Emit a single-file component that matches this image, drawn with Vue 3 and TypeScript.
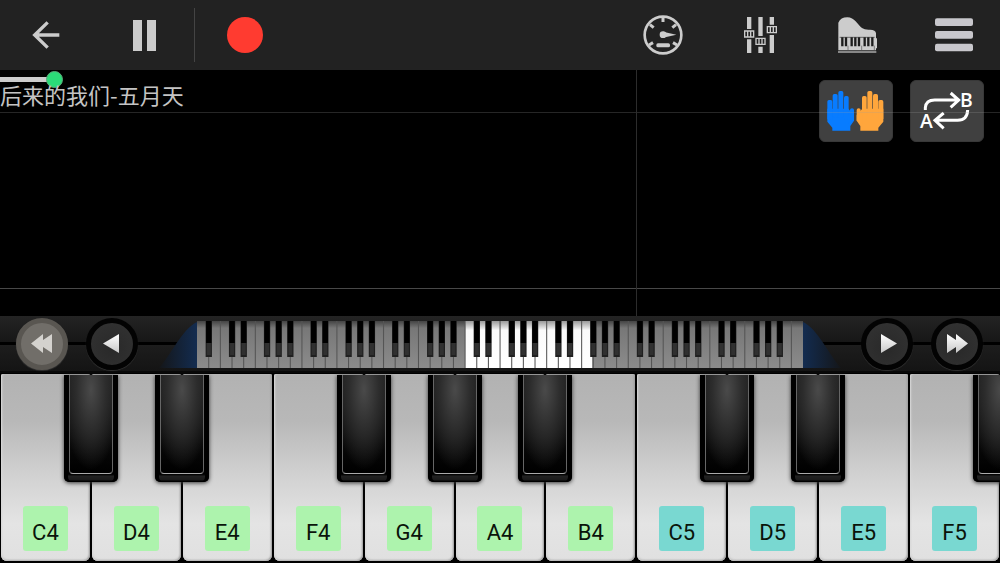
<script setup lang="ts">
import { computed, ref } from 'vue'

interface PianoKey {
  name: string
  octave: number
  sharp: boolean
}

const position = ref(4.7)
const trackStyle = computed(() => ({ backgroundSize: `${position.value}% 5px` }))

const keys: PianoKey[] = [
  { name: 'C4', octave: 4, sharp: true },
  { name: 'D4', octave: 4, sharp: true },
  { name: 'E4', octave: 4, sharp: false },
  { name: 'F4', octave: 4, sharp: true },
  { name: 'G4', octave: 4, sharp: true },
  { name: 'A4', octave: 4, sharp: true },
  { name: 'B4', octave: 4, sharp: false },
  { name: 'C5', octave: 5, sharp: true },
  { name: 'D5', octave: 5, sharp: true },
  { name: 'E5', octave: 5, sharp: false },
  { name: 'F5', octave: 5, sharp: true },
]

// The overview shows all 52 white keys of a full piano, starting at A0.
const whiteCount = 52
const firstVisible = 23
const visibleCount = 10.9
const separators = Array.from({ length: whiteCount - 1 }, (_, i) => i + 1)
const blacks = separators.filter((i) => ![2, 5].includes(i % 7))
</script>

<template>
  <main class="app">
    <header class="toolbar">
      <button class="tool" type="button" aria-label="Back">
        <svg width="28" height="28" viewBox="0 0 84 84">
          <path d="M47 4L8 42L47 80M9 42H82" fill="none" stroke="#ccc" stroke-width="10" />
        </svg>
      </button>
      <button class="tool pause" type="button" aria-label="Pause">
        <svg width="23" height="31" viewBox="0 0 23 31">
          <path d="M0 0H9V31H0zM14 0H23V31H14z" fill="#ccc" />
        </svg>
      </button>
      <span class="divider"></span>
      <button class="tool" type="button" aria-label="Record">
        <svg width="36" height="36" viewBox="0 0 36 36"><circle cx="18" cy="18" r="18" fill="#ff3b30" /></svg>
      </button>
      <div class="tools">
        <button class="tool" type="button" aria-label="Tempo">
          <svg width="40" height="40" viewBox="0 0 120 120">
            <circle cx="60" cy="60" r="55" fill="none" stroke="#ccc" stroke-width="8" />
            <path d="M60 5V21M21 29L32 38M99 29L88 38M18 90L30 83M102 90L90 83" stroke="#ccc" stroke-width="9" />
            <circle cx="60" cy="59" r="10" fill="#ccc" />
            <path d="M60 50L100 59L60 68z" fill="#ccc" />
            <rect x="40" y="85" width="41" height="12" rx="5" fill="#ccc" />
          </svg>
        </button>
        <button class="tool" type="button" aria-label="Mixer">
          <svg width="33" height="36" viewBox="0 0 99 108">
            <path d="M9 0H22V36H9zM9 67H22V108H9zM43 0H56V57H43zM43 89H56V108H43zM77 0H90V23H77zM77 54H90V108H77z" fill="#ccc" />
            <path d="M2 42H29V60H2zM11 42V60M20 42V60M36 64H63V82H36zM45 64V82M54 64V82M70 29H97V47H70zM79 29V47M88 29V47" fill="none" stroke="#ccc" stroke-width="4" />
          </svg>
        </button>
        <button class="tool" type="button" aria-label="Instrument">
          <svg width="39" height="36" viewBox="0 0 117 108">
            <path d="M1 100V17Q8 1 28 1C50 1 58 22 72 33Q80 39 96 38Q113 38 114 49V64H117V94H114V100z" fill="#ccc" />
            <path d="M5 61H110" stroke="#333" stroke-width="2" />
            <path d="M13 61V88M24 61V88M41 61V88M52 61V88M63 61V88M80 61V88M91 61V88M103 61V88" stroke="#1c1c1c" stroke-width="7" />
            <path d="M30 86V99M71 86V99M109 86V99" stroke="#555" stroke-width="2" />
            <path d="M0 105H115" stroke="#aaa" stroke-width="4" />
          </svg>
        </button>
        <button class="tool" type="button" aria-label="Menu">
          <svg width="38" height="34" viewBox="0 0 114 102" fill="#c8c7cc">
            <rect y="1" width="114" height="23" rx="6" />
            <rect y="39" width="114" height="23" rx="6" />
            <rect y="77" width="114" height="23" rx="6" />
          </svg>
        </button>
      </div>
    </header>

    <section class="roll">
      <input v-model.number="position" class="seek" :style="trackStyle" type="range" min="0" max="100" step="0.1" aria-label="Song position" />
      <div class="roll-row">
        <h1 class="title">后来的我们-五月天</h1>
        <div class="modes">
          <button class="mode" type="button" aria-label="Both hands">
            <svg width="60" height="42" viewBox="0 0 180 126">
              <defs>
                <g id="hand">
                  <path d="M4 56H67L84 75V92L73 108V122H19V113L4 95z" />
                  <rect x="4" y="30" width="15" height="60" rx="5" />
                  <rect x="20" y="12" width="15" height="70" rx="5" />
                  <rect x="37" y="3" width="15" height="80" rx="5" />
                  <rect x="54" y="18" width="14" height="70" rx="5" />
                  <path d="M66 76L72 66V60Q72 55 78 55Q84 55 84 60V92L66 100z" />
                </g>
              </defs>
              <use href="#hand" fill="#087cff" />
              <use href="#hand" fill="#ffa63c" transform="translate(176 0) scale(-1 1)" />
            </svg>
          </button>
          <button class="mode" type="button" aria-label="Repeat from A to B">
            <svg width="66" height="56" viewBox="-16 -24 198 168">
              <g fill="none" stroke="#fff" stroke-width="9">
                <path d="M18 57V50Q20 27 46 27H117M94 6L118 27L94 49" />
                <path d="M145 57Q144 87 115 88H48M73 66L47 88L73 112" />
              </g>
              <text class="loop-letter" x="122" y="48">B</text>
              <text class="loop-letter" x="2" y="110">A</text>
            </svg>
          </button>
        </div>
      </div>
      <span class="line line-top"></span>
      <span class="line line-bottom"></span>
      <span class="line-octave"></span>
    </section>

    <nav class="range" aria-label="Keyboard range">
      <button class="round held" type="button" aria-label="Previous octave">
        <svg width="22" height="19" viewBox="0 0 22 19"><path d="M0 9.500L12 0V6L21 0V19L12 13V19z" fill="#d4d2ce" /></svg>
      </button>
      <button class="round" type="button" aria-label="Previous key">
        <svg width="22" height="19" viewBox="0 0 22 19"><path d="M2 9.500L18 0V19z" fill="url(#shine)" /></svg>
      </button>
      <div class="overview">
        <svg class="wing" viewBox="0 0 38 47" preserveAspectRatio="none">
          <defs>
            <linearGradient id="blue"><stop offset="0" stop-color="#141619" /><stop offset="1" stop-color="#132c50" /></linearGradient>
            <linearGradient id="shine" x2="0" y2="1"><stop offset="0" stop-color="#fff" /><stop offset="1" stop-color="#c8c8c8" /></linearGradient>
          </defs>
          <path d="M0 47C12 34 23 8 38 1V47z" fill="url(#blue)" />
        </svg>
        <svg class="mini" viewBox="0 0 52 47" preserveAspectRatio="none" role="img" aria-label="Full keyboard">
          <defs>
            <linearGradient id="grey" x2="0" y2="1">
              <stop offset="0" stop-color="#444" /><stop offset=".15" stop-color="#777" /><stop offset="1" stop-color="#8b8b8b" />
            </linearGradient>
            <linearGradient id="lit" x2="0" y2="1">
              <stop offset="0" stop-color="#999" /><stop offset=".2" stop-color="#fafafa" /><stop offset="1" stop-color="#fff" />
            </linearGradient>
          </defs>
          <rect width="52" height="47" fill="url(#grey)" />
          <rect :x="firstVisible" :width="visibleCount" height="47" fill="url(#lit)" />
          <rect v-for="i in separators" :key="i" :x="i - 0.04" width=".09" height="47" fill="#555" />
          <g v-for="i in blacks" :key="i">
            <rect :x="i - 0.26" width=".54" height="36" fill="#202020" />
            <rect :x="i - 0.22" width=".46" height="22" fill="#000" />
            <rect :x="i - 0.16" y="22" width=".34" height="12" fill="#303030" />
          </g>
        </svg>
        <svg class="wing flipped" viewBox="0 0 38 47" preserveAspectRatio="none">
          <path d="M0 47C12 34 23 8 38 1V47z" fill="url(#blue)" />
        </svg>
      </div>
      <button class="round" type="button" aria-label="Next key">
        <svg width="22" height="19" viewBox="0 0 22 19"><path d="M5 0L21 9.500L5 19z" fill="url(#shine)" /></svg>
      </button>
      <button class="round" type="button" aria-label="Next octave">
        <svg width="22" height="19" viewBox="0 0 22 19"><path d="M1 0L10 6V0L22 9.500L10 19V13L1 19z" fill="url(#shine)" /></svg>
      </button>
    </nav>

    <section class="piano" aria-label="Piano">
      <div v-for="key in keys" :key="key.name" class="slot">
        <button class="white" type="button">
          <span class="note" :class="{ high: key.octave === 5 }">{{ key.name }}</span>
        </button>
        <button v-if="key.sharp" class="black" type="button" :aria-label="`${key.name} sharp`">
          <span class="black-top"></span>
        </button>
      </div>
    </section>
  </main>
</template>

<style>
body {
  margin: 0;
  background: #000;
}
</style>

<style scoped>
.app {
  display: flex;
  flex-direction: column;
  min-height: 100vh;
  overflow: hidden;
  background: #000;
  font-family: Roboto, "Noto Sans CJK SC", sans-serif;
}

button {
  margin: 0;
  padding: 0;
  border: 0;
  background: none;
  font: inherit;
  cursor: pointer;
}

svg {
  display: block;
}

.toolbar {
  display: flex;
  align-items: center;
  height: 70px;
  background: #222;
}

.tool {
  display: flex;
  align-items: center;
  justify-content: center;
  width: 92px;
  height: 70px;
}

.pause {
  margin-left: 6px;
}

.divider {
  width: 1px;
  height: 54px;
  margin: 0 4px;
  background: #444;
}

.tools {
  display: flex;
  gap: 5px;
  margin-left: auto;
}

.roll {
  position: relative;
  flex: 1;
  min-height: 246px;
}

.seek {
  position: absolute;
  top: 0;
  left: 0;
  width: 100%;
  height: 19px;
  margin: 0;
  appearance: none;
  background: linear-gradient(#ccc, #ccc) no-repeat left center;
}

.seek::-webkit-slider-thumb {
  appearance: none;
  box-sizing: border-box;
  width: 17px;
  height: 17px;
  border: 1px solid #5ba878;
  border-radius: 50%;
  background: #2bdc78;
}

.roll-row {
  display: flex;
  justify-content: space-between;
  padding: 10px 16px 0 0;
}

.title {
  position: relative;
  margin: 0;
  font-family: "Noto Sans CJK SC", sans-serif;
  font-size: 22px;
  font-weight: 400;
  line-height: 28px;
  color: #c4c4c4;
  pointer-events: none;
}

.modes {
  position: relative;
  display: flex;
  gap: 17px;
}

.mode {
  display: flex;
  align-items: center;
  justify-content: center;
  width: 74px;
  height: 62px;
  border: 1px solid #383838;
  border-radius: 6px;
  background: #404040;
}

.loop-letter {
  font-family: "Open Sans", sans-serif;
  font-size: 58px;
  font-weight: 600;
  fill: #fff;
}

.line,
.line-octave {
  position: absolute;
  pointer-events: none;
}

.line {
  left: 0;
  right: 0;
  height: 1px;
}

.line-top {
  top: 42px;
  background: rgba(160, 160, 160, 0.24);
}

.line-bottom {
  top: 218px;
  background: #484848;
}

.line-octave {
  top: 0;
  bottom: 0;
  left: 63.6%;
  width: 1px;
  background: #2c2c2c;
}

.range {
  display: flex;
  align-items: center;
  gap: 18px;
  box-sizing: border-box;
  height: 57px;
  padding: 0 17px 0 16px;
  border-bottom: 2px solid #080808;
  background: linear-gradient(#242424, #171717 26px, #000 26px, #000 29px, #1d1d1d 29px, #141414);
}

.round {
  display: flex;
  flex: none;
  align-items: center;
  justify-content: center;
  box-sizing: border-box;
  width: 52px;
  height: 52px;
  border: 5px solid #030303;
  border-radius: 50%;
  background: radial-gradient(circle at 50% 60%, #292929, #333);
  box-shadow: 0 1px 1px #333;
}

.held {
  border-color: #595651;
  background: #716e69;
}

.overview {
  display: flex;
  flex: 1;
  height: 47px;
  margin: 1px 2px 0 3px;
}

.mini {
  flex: 1;
  min-width: 0;
  height: 47px;
}

.wing {
  flex: none;
  width: 38px;
  height: 47px;
}

.flipped {
  transform: scaleX(-1);
}

.piano {
  display: grid;
  grid-template-columns: repeat(11, minmax(0, 1fr));
  height: 190px;
  overflow: hidden;
  background: #000;
}

.slot {
  position: relative;
  padding: 1px 1px 2px;
}

.white {
  display: flex;
  align-items: flex-end;
  justify-content: center;
  box-sizing: border-box;
  width: 100%;
  height: 187px;
  padding-bottom: 10px;
  border-radius: 2px 2px 6px 6px;
  background: linear-gradient(#b2b2b2, #b8b8b8 25%, #d2d2d2 55%, #e4e4e4 80%, #e0e0e0);
  box-shadow: inset 1px 0 2px #ddd, inset -1px 0 2px #999, inset 0 -1px 2px #aaa;
}

.note {
  box-sizing: border-box;
  width: 45px;
  height: 45px;
  padding-top: 8px;
  border-radius: 3px;
  background: #adf3ad;
  font-size: 22px;
  line-height: 38px;
  text-align: center;
  color: #0a140a;
}

.high {
  background: #79d8d1;
}

.black {
  position: absolute;
  z-index: 1;
  top: 2px;
  right: -27px;
  box-sizing: border-box;
  width: 54px;
  height: 107px;
  padding: 0 5px 8px;
  border-radius: 0 0 5px 5px;
  background: linear-gradient(#000 99px, #080808 100px, #222 101px, #1a1a1a 105px, #000 106px);
  box-shadow: 0 1px 4px #333, inset 4px 0 0 #000, inset -4px 0 0 #000;
}

.black-top {
  display: block;
  box-sizing: border-box;
  height: 99px;
  border: 1px solid;
  border-top: 0;
  border-color: #333 #666 #aaa;
  border-radius: 0 0 4px 4px;
  background: radial-gradient(ellipse 30px 80px at 50% 15%, #4a4a4a, #2c2c2c 50%, transparent), linear-gradient(#1c1c1c, #0c0c0c 60%, #000);
}
</style>
